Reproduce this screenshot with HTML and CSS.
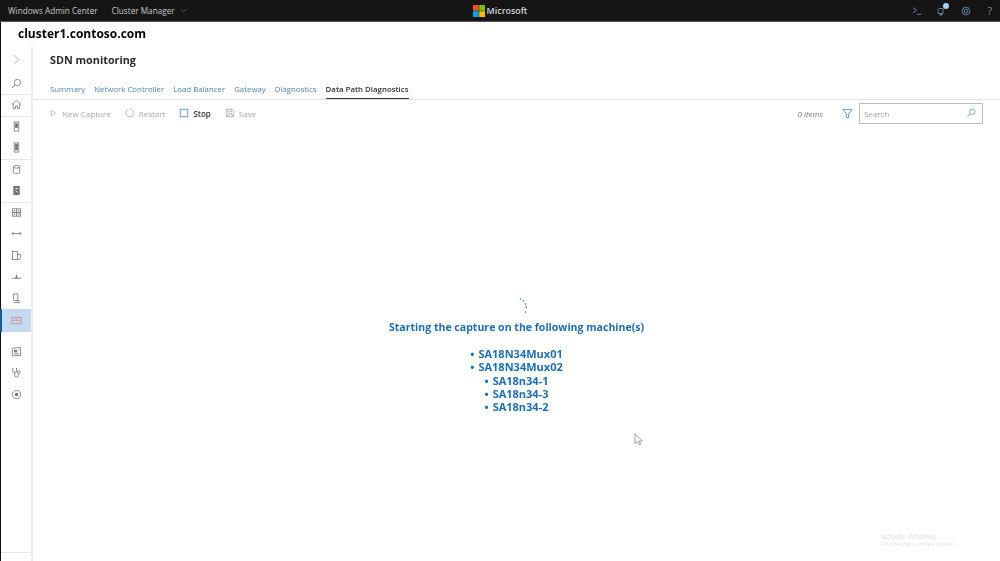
FILE: index.html
```html
<!DOCTYPE html>
<html lang="en">
<head>
<meta charset="utf-8">
<title>SDN monitoring</title>
<link rel="stylesheet" href="styles.css">
</head>
<body>
<div class="app">
  <header class="topbar">
    <div class="brand-group">
      <span class="brand">Windows Admin Center</span>
      <span class="brand">Cluster Manager</span>
      <svg class="chev" viewBox="0 0 10 6"><path d="M1 1l4 4 4-4"/></svg>
    </div>
    <div class="ms">
      <svg class="ms-logo" viewBox="0 0 12 12"><rect width="5.8" height="5.8" fill="#f25022"/><rect x="6.2" width="5.8" height="5.8" fill="#7fba00"/><rect y="6.2" width="5.8" height="5.8" fill="#00a4ef"/><rect x="6.2" y="6.2" width="5.8" height="5.8" fill="#ffb900"/></svg>
      <span>Microsoft</span>
    </div>
    <div class="top-icons">
      <svg class="ti" viewBox="0 0 12 10"><path d="M1 1l4.5 3L1 7M6 9h5"/></svg>
      <span class="bell">
        <svg class="ti" viewBox="0 0 10 12"><path d="M2.5 3h5v6h-6V4zM4 9.500h2v1.500H4z"/></svg>
        <i class="dot"></i>
      </span>
      <svg class="ti" viewBox="0 0 12 12"><circle cx="6" cy="6" r="4.600"/><circle cx="6" cy="6" r="2.200"/></svg>
      <span class="help">?</span>
    </div>
  </header>

  <div class="cluster">cluster1.contoso.com</div>

  <div class="body">
    <nav class="rail">
      <div class="rail-item expander"><svg viewBox="0 0 10 12"><path d="M3 1l5 5-5 5"/></svg></div>
      <div class="rail-item finder"><svg viewBox="0 0 12 12"><circle cx="7" cy="5" r="3.500"/><path d="M4.500 7.500L1 11"/></svg></div>
      <div class="rail-item line-top"><svg viewBox="0 0 12 12"><path d="M1 6l5-4.500L11 6M2.500 5v5.500h2.500V7.500h2v3h2.500V5"/></svg></div>
      <div class="rail-item line-top"><svg viewBox="0 0 12 12"><rect x="3.500" y="1" width="5" height="10"/><rect class="fill" x="4.500" y="2.500" width="3" height="5"/></svg></div>
      <div class="rail-item"><svg viewBox="0 0 12 12"><rect x="3.500" y="1" width="5" height="10"/><rect class="fill" x="4.500" y="2" width="3" height="7"/></svg></div>
      <div class="rail-item line-top"><svg viewBox="0 0 12 12"><ellipse cx="6" cy="3" rx="3.500" ry="1.500"/><path d="M2.500 3v6c0 2 7 2 7 0V3"/></svg></div>
      <div class="rail-item"><svg viewBox="0 0 12 12"><rect class="fill" x="2.500" y="1" width="7" height="10"/><path class="white" d="M5 4h2.500M5 6l2 2"/></svg></div>
      <div class="rail-item line-top"><svg viewBox="0 0 12 12"><rect x="1.500" y="2" width="9" height="8"/><path d="M6 2v8M1.500 6h9"/><rect class="fill" x="3" y="3.500" width="1.500" height="1.500"/><rect class="fill" x="7.500" y="3.500" width="1.500" height="1.500"/><rect class="fill" x="3" y="7" width="1.500" height="1.500"/><rect class="fill" x="7.500" y="7" width="1.500" height="1.500"/></svg></div>
      <div class="rail-item"><svg viewBox="0 0 12 12"><path d="M1 6h10M3 4L1 6l2 2M9 4l2 2-2 2"/></svg></div>
      <div class="rail-item"><svg viewBox="0 0 12 12"><rect x="1.500" y="1.500" width="5.500" height="9"/><path d="M7 5h3.500v3.500L8.800 10.800 7 9.500"/></svg></div>
      <div class="rail-item"><svg viewBox="0 0 12 12"><path d="M1 8h10M6 4v4M4.500 8L6 5.500 7.500 8"/></svg></div>
      <div class="rail-item"><svg viewBox="0 0 12 12"><rect x="3" y="1" width="4.500" height="7"/><path d="M3 10.500h7M5 8.500h5"/></svg></div>
      <div class="rail-item active"><svg viewBox="0 0 12 12"><rect class="red" x="1" y="2.500" width="10" height="7"/><path class="red" d="M2.500 6h2l1-1.500 1 2 1-.5h2"/></svg></div>
      <div class="rail-gap"></div>
      <div class="rail-item"><svg viewBox="0 0 12 12"><path d="M1.500 2.500l9-1v9h-9z"/><rect class="fill" x="3.500" y="4" width="3" height="3"/><path d="M7.500 4.500h1.500M3.500 8.500h5"/></svg></div>
      <div class="rail-item"><svg viewBox="0 0 12 12"><path d="M2 1v3.500a2 2 0 004 0V1M4 6.500v2.500a2 2 0 004 0V7"/><circle cx="8.500" cy="5.500" r="1.500"/></svg></div>
      <div class="rail-item"><svg viewBox="0 0 12 12"><circle cx="6" cy="6" r="4.500"/><circle class="fill" cx="6" cy="6" r="2"/></svg></div>
      <div class="rail-spacer"></div>
      <div class="rail-foot"></div>
    </nav>

    <main class="content">
      <h1 class="title">SDN monitoring</h1>
      <div class="tabs">
        <a class="tab">Summary</a>
        <a class="tab">Network Controller</a>
        <a class="tab">Load Balancer</a>
        <a class="tab">Gateway</a>
        <a class="tab">Diagnostics</a>
        <a class="tab current">Data Path Diagnostics</a>
      </div>
      <div class="toolbar">
        <div class="tool off"><svg viewBox="0 0 10 10"><path d="M2 1l6 4-6 4z"/></svg>New Capture</div>
        <div class="tool off"><svg class="wide" viewBox="0 0 12 12"><path d="M3.500 1.800A4.800 4.800 0 106 1.200"/></svg>Restart</div>
        <div class="tool on"><svg class="wide" viewBox="0 0 12 12"><rect x="1.500" y="1.500" width="9" height="9"/></svg>Stop</div>
        <div class="tool off"><svg class="wide" viewBox="0 0 12 12"><path d="M1.500 1.500h7.500l1.500 1.500v7.500h-9zM3.500 1.500v3h4.500v-3M3.500 10.500V7h5v3.500"/></svg>Save</div>
        <div class="tool-right">
          <span class="count">0 items</span>
          <svg class="filter" viewBox="0 0 12 12"><path d="M1 1.500h10L7.300 6v4.500H4.700V6z"/></svg>
          <div class="search">
            <span>Search</span>
            <svg viewBox="0 0 12 12"><circle cx="7.500" cy="4.500" r="3.300"/><path d="M5 7L1.500 10.500"/></svg>
          </div>
        </div>
      </div>
      <section class="status">
        <svg class="spinner" viewBox="0 0 10 17"><circle cx="1.500" cy="2" r=".8"/><circle cx="4.500" cy="4" r=".8"/><circle cx="6.500" cy="7" r=".8"/><circle cx="7.200" cy="10" r=".8"/><circle cx="6.500" cy="15" r=".8"/></svg>
        <p class="headline">Starting the capture on the following machine(s)</p>
        <ul class="machines">
          <li>SA18N34Mux01</li>
          <li>SA18N34Mux02</li>
          <li>SA18n34-1</li>
          <li>SA18n34-3</li>
          <li>SA18n34-2</li>
        </ul>
      </section>
      <svg class="cursor" viewBox="0 0 10 13"><path d="M1 1v9.500l2.500-2 1.800 3.500 1.500-.8L5 8h3.500z"/></svg>
      <div class="activate">
        <div class="a1">Activate Windows</div>
        <div class="a2">Go to Settings to activate Windows.</div>
      </div>
    </main>
  </div>
</div>
</body>
</html>
```
FILE: styles.css
```css
* { box-sizing: border-box; }
html, body { margin: 0; padding: 0; height: 100%; background: #fff; }
body { font-family: "Open Sans", "Noto Sans", sans-serif; overflow: hidden; }
.app { width: 1000px; height: 561px; display: flex; flex-direction: column; filter: blur(.45px); }

.topbar { height: 22px; flex: none; background: #151515; border-bottom: 1px solid #555; display: grid; grid-template-columns: 1fr auto 1fr; align-items: center; color: #c8c8c8; font-size: 8.200px; }
.brand-group { display: flex; align-items: center; padding-left: 8px; }
.brand + .brand { margin-left: 14px; }
.chev { width: 7px; height: 5px; margin-left: 5px; fill: none; stroke: #777; stroke-width: 1; }
.ms { display: flex; align-items: center; gap: 2px; font-size: 8.900px; font-weight: 600; color: #d4d4d4; }
.ms-logo { width: 12px; height: 12px; }
.top-icons { display: flex; justify-content: flex-end; align-items: center; gap: 14.500px; padding-right: 5px; }
.ti { width: 10px; height: 10px; fill: none; stroke: #6f95b8; stroke-width: 1; display: block; }
.bell { position: relative; display: block; }
.dot { position: absolute; top: -3px; right: -3px; width: 6px; height: 6px; border-radius: 50%; background: #a9d3f5; }
.help { color: #7d93a8; font-size: 10px; line-height: 10px; width: 10px; text-align: center; }

.cluster { height: 24px; flex: none; padding: 2px 0 0 17px; font-size: 12px; font-weight: 700; line-height: 20px; color: #000; background: #fff; border-left: 1px solid #111; }

.body { flex: 1; display: flex; min-height: 0; }
.rail { width: 33px; flex: none; display: flex; flex-direction: column; border-left: 1.500px solid #111; border-right: 2px solid #eee; }
.rail-item { height: 21.500px; flex: none; display: flex; align-items: center; justify-content: center; }
.rail-item svg { width: 11px; height: 11px; fill: none; stroke: #777; stroke-width: .9; }
.rail-item svg .fill { fill: #777; stroke: none; }
.rail-item svg .white { stroke: #fff; }
.rail-item svg .red { stroke: #d0867e; fill: none; }
.line-top { box-shadow: inset 0 1px 0 #e6e6e6; }
.expander { height: 26px; }
.finder { height: 22px; }
.expander svg { stroke: #8fb0c9; width: 10px; height: 11px; stroke-width: 1; }
.active { background: #c3d9ef; position: relative; height: 23px; }
.active::before { content: ""; position: absolute; left: -1.500px; top: 0; bottom: 0; width: 2.500px; background: #0f5ea8; }
.rail-gap { height: 8.500px; flex: none; }
.rail-spacer { flex: 1; }
.rail-foot { height: 9px; flex: none; border-top: 1.500px solid #e6e6e6; }

.content { flex: 1; position: relative; min-width: 0; padding-top: 5px; }
.title { margin: 0 0 0 17px; font-size: 10.800px; font-weight: 700; line-height: 18px; color: #2b2b2b; }
.tabs { display: flex; gap: 9px; height: 29px; margin-top: 2px; padding: 12px 0 0 17px; border-bottom: 1px solid #e3e3e3; font-size: 7.850px; line-height: 13px; }
.tab { color: #4e86b8; height: 16px; }
.tab.current { color: #333; font-weight: 600; border-bottom: 1.500px solid #333; }
.toolbar { display: flex; align-items: center; height: 26px; padding: 0 17px; font-size: 8px; }
.tool { display: flex; align-items: center; margin-right: 14px; }
.tool svg { width: 7px; height: 8px; margin-right: 5px; fill: none; stroke: #aaa; stroke-width: 1; }
.tool svg.wide { width: 10px; height: 10px; margin-right: 4px; }
.tool.off { color: #a9a9a9; }
.tool.on { color: #333; font-weight: 600; }
.tool.on svg { stroke: #5d8db5; }
.tool-right { margin-left: auto; display: flex; align-items: center; }
.count { font-style: italic; color: #777; margin-right: 19px; }
.filter { width: 11px; height: 11px; fill: none; stroke: #5d93b5; stroke-width: 1; margin-right: 6px; }
.search { width: 124px; height: 21px; border: 1px solid #bdbdbd; display: flex; align-items: center; justify-content: space-between; padding: 0 6px 0 4px; color: #a9a9a9; }
.search svg { width: 10px; height: 10px; fill: none; stroke: #6f95b8; stroke-width: 1; }

.status { display: flex; flex-direction: column; align-items: center; color: #1d6fb5; font-weight: 700; margin-top: 171px; }
.spinner { width: 10px; height: 17px; fill: #1d6fb5; margin-left: 15px; display: block; }
.headline { margin: 6px 0 0; font-size: 10.550px; line-height: 14px; }
.machines { list-style: none; margin: 13px 0 0; padding: 0; font-size: 11px; line-height: 13.300px; text-align: center; }
.machines li::before { content: "•"; margin-right: 4px; }

.cursor { position: absolute; left: 601px; top: 387px; width: 10px; height: 13px; fill: #fff; stroke: #8a8a8a; stroke-width: .8; }
.activate { position: absolute; left: 849px; top: 487px; color: #dcdcdc; }
.a1 { font-size: 6.500px; line-height: 8px; }
.a2 { font-size: 4.500px; line-height: 6px; }
```
